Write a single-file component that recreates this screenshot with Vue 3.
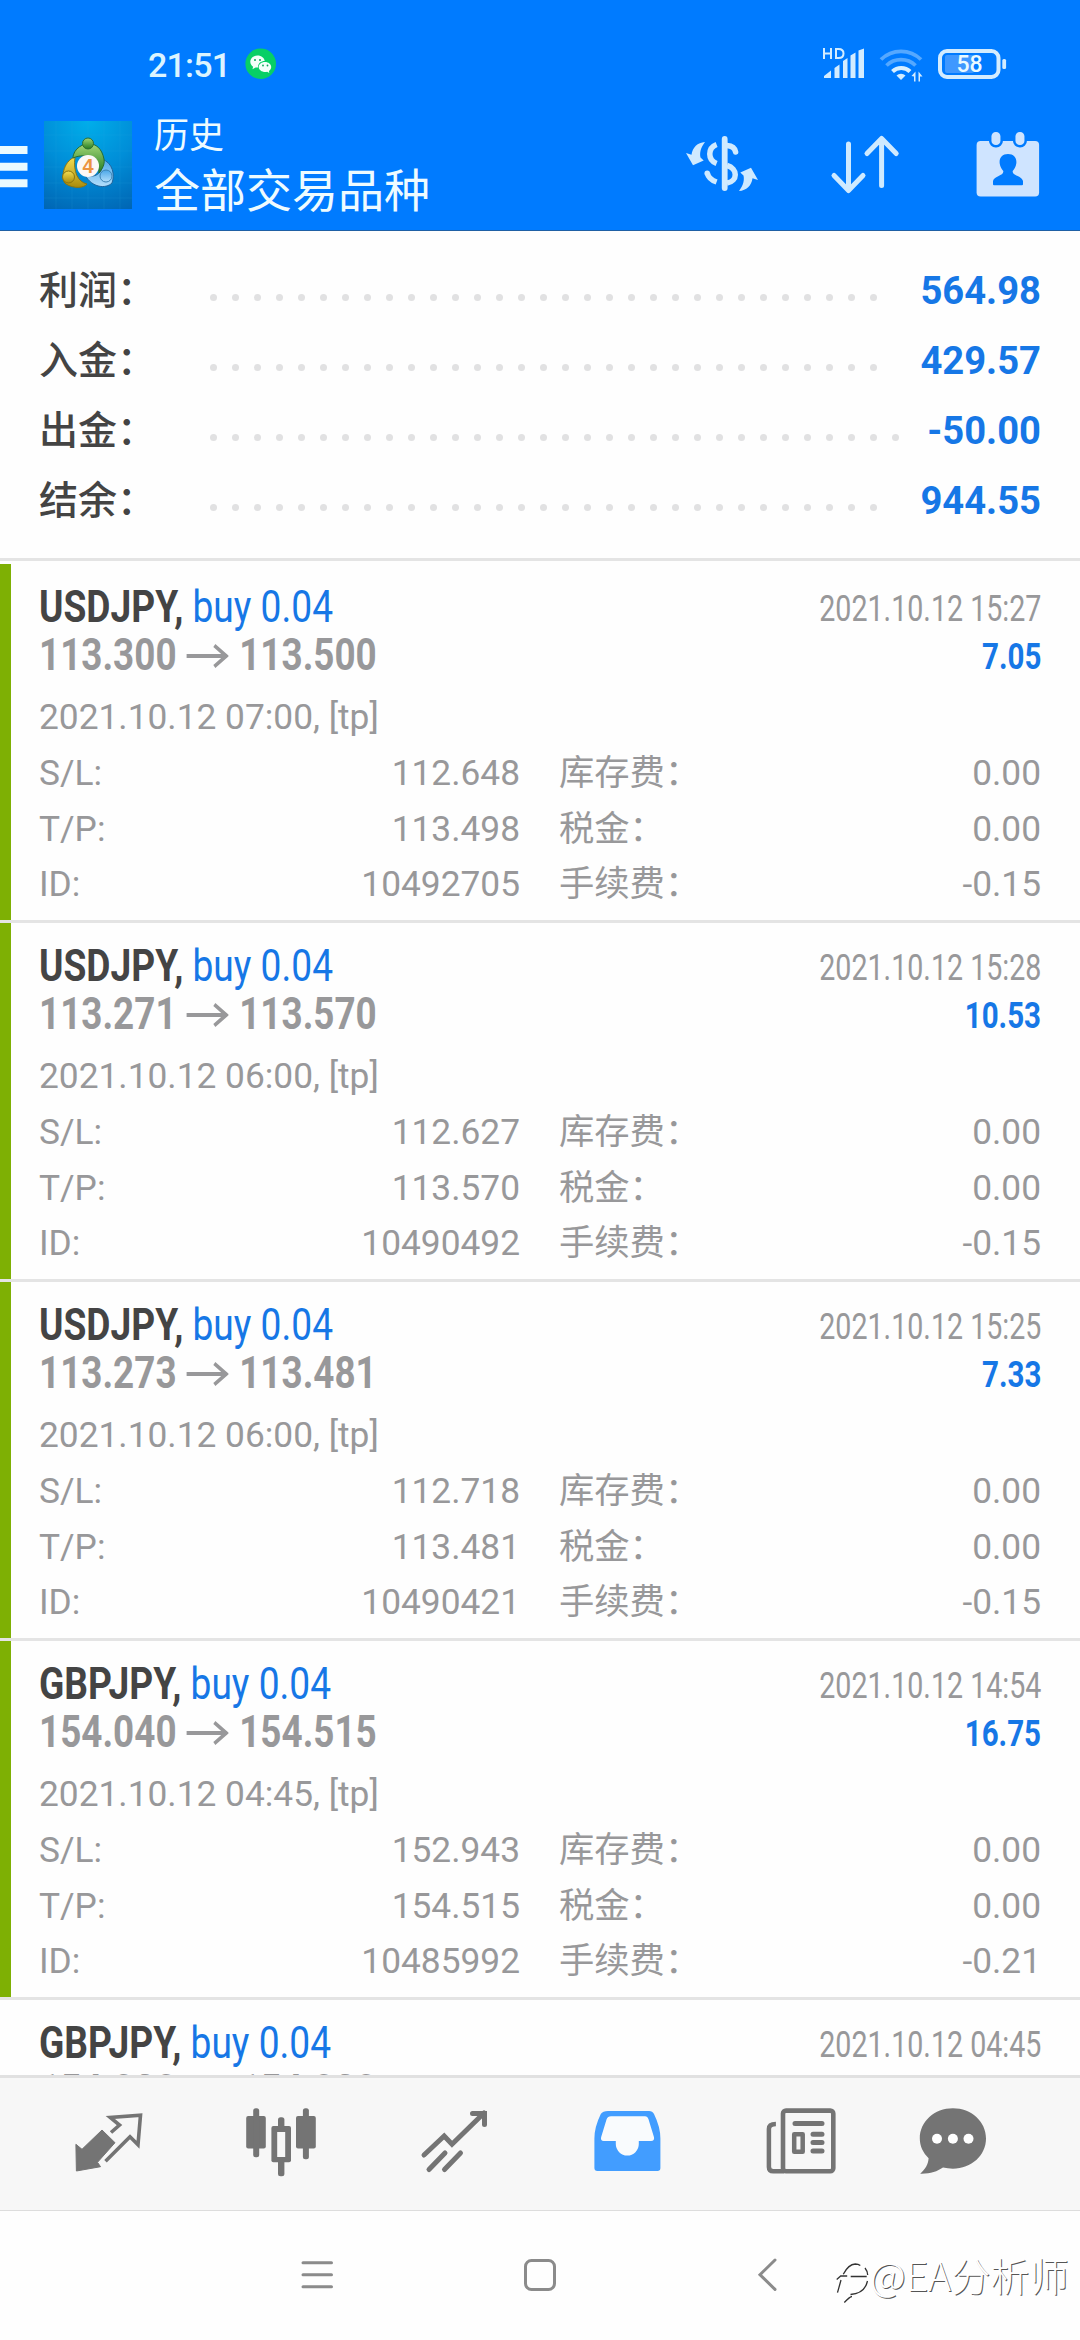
<script setup>
const summary = [
  { label: '利润：', value: '564.98', dots: 31 },
  { label: '入金：', value: '429.57', dots: 31 },
  { label: '出金：', value: '-50.00', dots: 32 },
  { label: '结余：', value: '944.55', dots: 31 },
]
const deals = [
  { symbol: 'USDJPY,', volume: 'buy 0.04', open: '113.300', close: '113.500', closed: '2021.10.12 15:27', profit: '7.05', opened: '2021.10.12 07:00, [tp]', sl: '112.648', tp: '113.498', id: '10492705', fee: '-0.15', win: true },
  { symbol: 'USDJPY,', volume: 'buy 0.04', open: '113.271', close: '113.570', closed: '2021.10.12 15:28', profit: '10.53', opened: '2021.10.12 06:00, [tp]', sl: '112.627', tp: '113.570', id: '10490492', fee: '-0.15', win: true },
  { symbol: 'USDJPY,', volume: 'buy 0.04', open: '113.273', close: '113.481', closed: '2021.10.12 15:25', profit: '7.33', opened: '2021.10.12 06:00, [tp]', sl: '112.718', tp: '113.481', id: '10490421', fee: '-0.15', win: true },
  { symbol: 'GBPJPY,', volume: 'buy 0.04', open: '154.040', close: '154.515', closed: '2021.10.12 14:54', profit: '16.75', opened: '2021.10.12 04:45, [tp]', sl: '152.943', tp: '154.515', id: '10485992', fee: '-0.21', win: true },
  { symbol: 'GBPJPY,', volume: 'buy 0.04', open: '154.020', close: '154.020', closed: '2021.10.12 04:45', profit: '', opened: '', sl: '', tp: '', id: '', fee: '', win: false },
]
</script>

<template>
  <div class="screen">
    <header class="top">
      <div class="status">
        <span class="clock">21:51</span>
        <svg class="wechat" width="32" height="32" viewBox="245 48 32 32">
          <circle cx="260.7" cy="63.7" r="15.3" fill="#07cf66" />
          <path d="M257.500 55.500c4 0 7 2.500 7.200 5.600c-4 0-7 2.600-6.600 6.400h-2.600l-3 1.800l.6-2.600c-1.700-1.200-2.800-3-2.800-5c0-3.500 3.200-6.200 7.200-6.200z" fill="#f2fffa" />
          <path d="M265 62c3.500 0 6.200 2.200 6.200 5c0 1.600-1 3.100-2.300 4l.4 2l-2.200-1.200c-4.300.9-8.400-1.500-8.400-4.800c0-2.800 2.800-5 6.300-5z" fill="#f2fffa" />
          <g fill="#07a95a"><circle cx="255" cy="60" r="1" /><circle cx="260" cy="60" r="1" /><circle cx="263" cy="65.500" r=".9" /><circle cx="267.500" cy="65.500" r=".9" /></g>
        </svg>
        <svg class="sys" width="190" height="36" viewBox="820 46 190 36">
          <g fill="none" stroke="#d3ecff" stroke-width="2"><path d="M824 48v11M831 48v11M824 53.500h7M836 49v9h2.500c3 0 5-1.500 5-4.500s-2-4.500-5-4.500z" /></g>
          <g fill="#d3ecff">
            <path d="M824 78v-2l7-5.500v7.500zM834.500 78v-10l5-3.500v13.500zM843 78v-17l4.500-3v20zM850.500 78v-22.500l5-3v25.500zM858.500 78v-27.500l5.500-2v29.500z" />
            <path d="M901 80l-4.500-4.500a6.500 6.500 0 0 1 9 0z" />
            <path d="M911.500 76l4-4.500v10h-1.500v-5zM918.500 71.500l4 5h-2.500v5h-1.500z" />
            <rect x="1002.300" y="59" width="3.800" height="10" rx="1.500" />
          </g>
          <g fill="none" stroke-linecap="butt">
            <path d="M881 59.500a28.500 28.500 0 0 1 40 0" stroke="#55a8ff" stroke-width="3.800" />
            <path d="M886.500 65.500a21 21 0 0 1 29 0" stroke="#55a8ff" stroke-width="3.800" />
            <path d="M892.500 71.500a12.500 12.500 0 0 1 17.500 0" stroke="#d9efff" stroke-width="4" />
          </g>
          <rect x="945" y="55" width="29" height="18" rx="2" fill="#3f98ff" />
          <rect x="940" y="51" width="58.500" height="26" rx="7" fill="none" stroke="#d3ecff" stroke-width="4" />
          <text x="969.500" y="72.300" text-anchor="middle" class="battery">58</text>
        </svg>
      </div>
      <div class="bar">
        <svg width="44" height="88" viewBox="0 121 44 88"><path d="M0 146h27.500v8H0zM0 162.700h27.500v8H0zM0 179.300h27.500v8H0z" fill="#eafaff" /></svg>
        <svg class="logo" width="88" height="88" viewBox="0 0 88 88">
          <defs>
            <radialGradient id="bg" cx=".5" cy="0" r="1.100"><stop offset="0" stop-color="#00aeea" /><stop offset=".5" stop-color="#008ed8" /><stop offset="1" stop-color="#0066b4" /></radialGradient>
            <linearGradient id="gr" x2="0" y2="1"><stop stop-color="#a5d879" /><stop offset="1" stop-color="#237c20" /></linearGradient>
            <linearGradient id="ye" x2="0" y2="1"><stop stop-color="#f5de51" /><stop offset="1" stop-color="#a98c0d" /></linearGradient>
            <linearGradient id="bl" x2="0" y2="1"><stop stop-color="#4ba7e8" /><stop offset="1" stop-color="#b1defb" /></linearGradient>
          </defs>
          <rect width="88" height="88" fill="url(#bg)" />
          <path d="M12 0v88M28 0v88M44 0v88M60 0v88M76 0v88M0 14h88M0 30h88M0 46h88M0 62h88M0 77h88" stroke="#32b4ec" stroke-opacity=".14" />
          <path d="M31 36C19 40 16 59 22 63c8 5 18 4 21 0c-9-2-14-12-12-27z" fill="url(#ye)" stroke="#8a7510" />
          <path d="M58 38c11 4 13 16 10 24c-6 6-20 5-27-8c11 4 20-3 17-16z" fill="url(#bl)" stroke="#21649b" />
          <path d="M29 37c0-14 26-24 31 1c1 6-2 10-5 14c0-14-12-21-26-15z" fill="url(#gr)" stroke="#276d32" />
          <circle cx="44" cy="22.500" r="5.500" fill="url(#gr)" stroke="#2f6d32" />
          <circle cx="24.500" cy="56" r="6" fill="url(#ye)" stroke="#8a7510" />
          <circle cx="62" cy="55" r="6" fill="url(#bl)" stroke="#3c83b5" />
          <circle cx="44" cy="45" r="11" fill="#fbf8f6" />
          <text x="44" y="51.500" text-anchor="middle" class="four">4</text>
        </svg>
        <div class="titles"><div class="t1">历史</div><div class="t2">全部交易品种</div></div>
        <svg class="tools" width="370" height="80" viewBox="680 126 370 80">
          <g fill="#cfeaff">
            <path id="arr" d="M705 142C700.500 148 699.500 153 700.500 157.500l3.200 3L693 165.200L686 153l5.500 1.800C692.500 147.500 697.500 142.500 705 142z" />
            <use href="#arr" transform="rotate(180 722 166.500)" />
            <rect x="721.800" y="136" width="5.800" height="55" rx="2.900" />
          </g>
          <g fill="none" stroke="#cfeaff" stroke-width="5.500">
            <path d="M716.600 144.500C707.500 148 707.500 160 716.600 163.500M716.600 182C711 180 708 176.500 707.300 173" />
            <path d="M707.200 173.200v0M727 145.500c5 .3 8 3 8.600 6.500" stroke-linecap="round" />
            <path d="M727 165.500c11 3 11 15.500 0 17.500" />
            <path d="M848.500 144v46M834 175.500l14.500 15l14.500-15M881.600 185.500V139M867 153.500l14.600-15l14.600 15" stroke-width="5" stroke-linecap="round" stroke-linejoin="round" />
          </g>
          <rect x="976.600" y="141" width="62.500" height="55.500" rx="4" fill="#cfe4ff" />
          <g fill="#cfe4ff" stroke="#007bff" stroke-width="2.500"><rect x="990.200" y="130.700" width="11.500" height="15.500" rx="5.500" /><rect x="1014.200" y="130.700" width="11.500" height="15.500" rx="5.500" /></g>
          <path d="M1008 154c6 0 9 4 8.300 9.500c-.4 3.500-2 5.500-3.600 7.500c-.6 5 9 4.500 10.300 10v3.300q0 1-1 1h-28q-1 0-1-1v-3.300c1.300-5.500 10.900-5 10.300-10c-1.600-2-3.200-4-3.600-7.500c-.7-5.500 2.300-9.500 8.300-9.500z" fill="#007bff" />
        </svg>
      </div>
    </header>

    <section class="summary">
      <div v-for="s in summary" :key="s.label" class="srow">
        <span class="slabel">{{ s.label }}</span>
        <span class="dots"><i v-for="n in s.dots" :key="n"></i></span>
        <span class="svalue">{{ s.value }}</span>
      </div>
    </section>

    <main class="list">
      <article v-for="(d, i) in deals" :key="i" class="deal" :class="{ win: d.win }">
        <div class="line">
          <span class="cond left"><b>{{ d.symbol }}</b> <span class="vol">{{ d.volume }}</span></span>
          <span class="cond right date">{{ d.closed }}</span>
        </div>
        <div class="line">
          <span class="cond left price">{{ d.open }}<svg width="50" height="26" viewBox="0 0 50 26"><path d="M0 13h47M33 2.500L47 13L33 23.500" fill="none" stroke="#98989a" stroke-width="4" /></svg>{{ d.close }}</span>
          <span class="cond right profit">{{ d.profit }}</span>
        </div>
        <template v-if="d.id">
          <div class="opened">{{ d.opened }}</div>
          <div class="grid"><span>S/L:</span><span class="num">{{ d.sl }}</span><span class="cn">库存费：</span><span class="num">0.00</span></div>
          <div class="grid"><span>T/P:</span><span class="num">{{ d.tp }}</span><span class="cn">税金：</span><span class="num">0.00</span></div>
          <div class="grid"><span>ID:</span><span class="num">{{ d.id }}</span><span class="cn">手续费：</span><span class="num">{{ d.fee }}</span></div>
        </template>
      </article>
    </main>

    <nav class="tabs">
      <svg width="1080" height="132" viewBox="0 2078 1080 132">
        <g fill="#747474">
          <path d="M102 2130l13 12.700l-17.500 19.600l3 4.400l-24.100 4.300l-.5-26.700l6.100 5z" stroke="#747474" stroke-linejoin="round" />
          <rect x="246.200" y="2116" width="19.600" height="32.500" rx="2" /><rect x="253.200" y="2108.300" width="6" height="49" rx="2.500" />
          <rect x="296" y="2116" width="19.800" height="32.500" rx="2" /><rect x="302.900" y="2108.300" width="6" height="51" rx="2.500" />
          <rect x="271.400" y="2126" width="19.600" height="36.300" rx="2" /><rect x="278" y="2117.300" width="6.400" height="59" rx="2.500" />
          <path d="M952.900 2108.300c18.500 0 33.100 13.300 33.100 30.200s-14.600 30.200-33.100 30.200q-5-.1-9.900-1.200c-6 4-13 6.500-22.800 6.200c5-4.500 8-9 8.400-15.500c-5.500-5.500-8.800-12-8.800-19.700c0-16.900 14.600-30.200 33.100-30.200z" />
        </g>
        <rect x="277.200" y="2132" width="8" height="25" fill="#f7f7f7" />
        <g fill="none" stroke="#747474">
          <path d="M111 2132.500l8.500-7.500l-9.200-7.500l30.200-2.300l-2.500 29.500l-8-8l-24.500 24.500" stroke-width="3.600" />
          <path d="M424 2155l20.200-19l7.800 8.300l32-31.300M429 2169.500l16-16.500M444.500 2169.500l16-16.500M472.500 2113.500h12v11" stroke-width="5" stroke-linecap="round" />
          <rect x="783" y="2110.600" width="50.300" height="60.700" rx="3" stroke-width="4.600" />
          <path d="M775.900 2124q-7 0-7 5v38q0 4.300 4.500 4.300H784" stroke-width="4.500" />
          <path d="M795 2123.500h27M813 2134.300h9M813 2142.500h9M813 2151h9" stroke-width="5" stroke-linecap="round" />
          <rect x="794.200" y="2134.200" width="8.500" height="17.500" stroke-width="4.500" stroke-linejoin="round" />
        </g>
        <path fill-rule="evenodd" fill="#429dff" d="M608 2111h41q3.500 0 5 3q6.400 13 6.400 24.500v29.500q0 3-3 3h-60q-3 0-3-3v-29.500q0-11.500 6.400-24.500q2-3 7.200-3z" />
        <path fill="#f9fbfd" d="M611 2116.300h34q2.500 0 3.500 3l5.500 18q.7 3.700-3 3.700h-12.200v3a11.500 11.500 0 0 1-23 0v-3h-12q-3.500 0-2.700-3.700l5.500-18q1-3 4.400-3z" />
        <g fill="#fff"><circle cx="937" cy="2138.700" r="5" /><circle cx="952.900" cy="2138.700" r="5" /><circle cx="968.500" cy="2138.700" r="5" /></g>
      </svg>
    </nav>
    <footer class="sysnav">
      <svg width="834" height="129" viewBox="0 2211 834 129"><g fill="none" stroke="#8b8b8b" stroke-width="3" stroke-linecap="round"><path d="M303 2262.700h28.500M303 2274.700h28.500M303 2286.700h28.500M775 2260l-15 14.700l15 14.700" /><rect x="525.500" y="2260.500" width="29" height="29" rx="6" /></g></svg>
      <svg class="mark" width="38" height="50" viewBox="834 2255 38 50"><g fill="none" stroke="#333" stroke-width="1.300"><path d="M843.300 2274.300q5-10 12-10.300q3 0 5 1.500M865 2268q2.500 3 2.700 7M850.700 2276.500h16M836.700 2279.500l4-3.500h6.500M841 2280l-3.500 12.700M867.500 2281c-2 9-9 13-17 13.500M852 2296.500q-2 0-7.700 6" /></g></svg>
      <span class="credit">@EA分析师</span>
    </footer>
  </div>
</template>

<style>
body { margin: 0; background: #fff; }
</style>
<style scoped>
.screen { width: 1080px; height: 2340px; overflow: hidden; display: flex; flex-direction: column; background: #fefefe; font-family: Roboto, "Noto Sans CJK SC", sans-serif; color: #98989a; }
.top { height: 230px; flex: none; background: #007bff; border-bottom: 1px solid #1f60a5; }
svg { display: block; flex: none; }
.status { display: flex; height: 121px; padding: 46px 70px 0 148px; box-sizing: border-box; }
.clock { font-size: 34px; line-height: 38px; font-weight: 500; letter-spacing: -.8px; color: #dcf4ff; width: 97px; }
.wechat { margin-top: 2px; }
.sys { margin-left: auto; }
.battery { font: 500 23px Roboto, sans-serif; fill: #eafaff; }
.bar { display: flex; height: 88px; }
.four { font: bold 20px "Liberation Sans", sans-serif; fill: #ec9441; }
.titles { margin-left: 22px; color: #eefbff; font-family: "Noto Sans CJK SC", sans-serif; font-weight: 400; }
.t1 { font-size: 35px; line-height: 40px; margin-top: -8px; }
.t2 { font-size: 46px; line-height: 56px; margin-top: 6px; white-space: nowrap; }
.tools { margin: 5px 30px 0 auto; }
.summary { flex: none; height: 302px; padding: 25px 39px 0; border-bottom: 3px solid #e4e4e4; margin-bottom: 3px; }
.srow { display: flex; height: 70px; align-items: center; }
.slabel { width: 171px; font-size: 39px; font-weight: 500; color: #444; white-space: nowrap; line-height: 70px; }
.dots { display: flex; gap: 15px; padding-top: 12px; }
.dots i { width: 7px; height: 7px; border-radius: 50%; background: #e1e1e2; }
.svalue { margin-left: auto; font-size: 38.2px; font-weight: 700; color: #1677e6; }
.list { height: 1511px; flex: none; overflow: hidden; }
.deal { height: 359px; box-sizing: border-box; border-bottom: 3px solid #e4e4e4; padding: 20px 39px 0; }
.deal.win { background: linear-gradient(#7eb004, #7eb004) 0 0 / 11px 356px no-repeat; }
.line { display: flex; justify-content: space-between; height: 48px; line-height: 48px; white-space: nowrap; }
.cond { display: block; font-size: 43.5px; transform: scaleX(.854); }
.left { transform-origin: 0 50%; }
.right { transform-origin: 100% 50%; font-size: 36px; line-height: 51px; }
.date { transform: scaleX(.795); }
.cond b { color: #444; }
.vol { color: #1677e6; }
.price { font-weight: 700; display: flex; align-items: center; transform: scaleX(.847); }
.price svg { margin: 0 12px; }
.profit { font-weight: 700; color: #1677e6; transform: scaleX(.82); }
.opened { font-size: 35.3px; margin: 15px 0 7px; height: 44px; line-height: 44px; white-space: nowrap; }
.grid { display: grid; grid-template-columns: 200px 281px 261px 1fr; height: 55.5px; line-height: 55px; font-size: 35.3px; align-items: center; }
.cn { padding-left: 39px; white-space: nowrap; }
.num { text-align: right; }
.tabs { height: 132px; flex: none; background: #f7f7f7; border-top: 3px solid #e1e1e1; border-bottom: 1px solid #ddd; }
.sysnav { flex: 1; display: flex; align-items: flex-start; }
.mark { margin-top: 44px; }
.credit { font: 300 39.2px/50px "Noto Sans CJK SC", sans-serif; margin: 38px 0 0 -2px; color: #fff; text-shadow: 1px 1px 0 #555; white-space: nowrap; }
</style>
